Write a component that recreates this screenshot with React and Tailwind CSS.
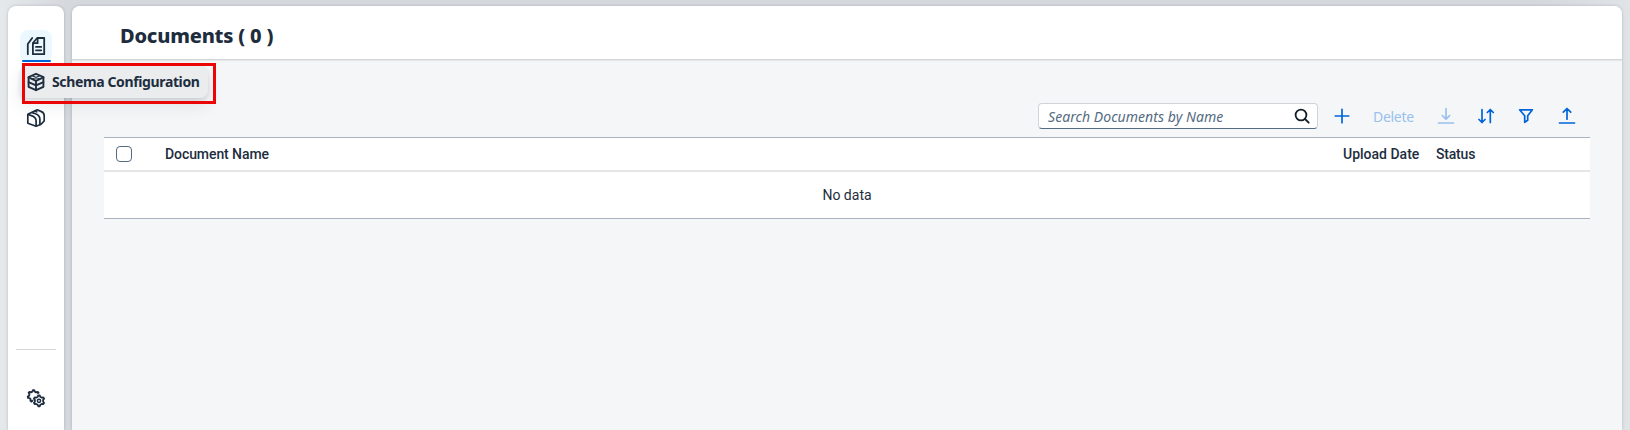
const stroke = {
  fill: "none",
  stroke: "currentColor",
  strokeLinecap: "round",
  strokeLinejoin: "round",
};

function DocumentsIcon() {
  return (
    <svg width="20" height="20" viewBox="0 0 20 20" {...stroke} strokeWidth="1.8">
      <path d="M1.8 18.2V8L6.2 2" />
      <path d="M6.9 18.2V7l4.300-5h7v16.200Z" />
      <path d="M11.6 2.4v4.800H7.400" />
      <path d="M10 10.900h5.200M10 14.300h5.200" />
    </svg>
  );
}

function SchemaIcon() {
  return (
    <svg width="20" height="20" viewBox="0 0 20 20" {...stroke} strokeWidth="1.9">
      <path d="M10 1.8 17.4 5v9.8L10 18.2l-7.4-3.4V5Z" />
      <path d="M2.6 5.4 10 8.8l7.4-3.4M10 8.8v9.2M2.6 10.2 10 13.4l7.4-3.2" />
      <path d="M6.2 3.8 13.6 7M13.8 3.8 6.4 7" strokeWidth="1.1" />
    </svg>
  );
}

function TemplatesIcon() {
  return (
    <svg width="20" height="20" viewBox="0 0 20 20" {...stroke} strokeWidth="1.7">
      <path d="M1.8 6.3v9l8.3 2.9 5-2 3.1-3.2V7.6c0-2.2-1-3.2-2.8-4L11.2 1.8 1.8 6.3l3.6 1.3c3 1 4.7 2.4 4.7 5.2v5.4" />
      <path d="m6.2 4.6 3.3 1.2c3 1.1 4.4 2.7 4.4 5.5v5.2" />
      <path d="m9.2 3.2 1.6.6" />
    </svg>
  );
}

function gearPath(cx, cy, outer, inner, teeth) {
  const points = [];
  for (let i = 0; i < teeth; i += 1) {
    const center = (i / teeth) * Math.PI * 2 - Math.PI / 2;
    const step = (Math.PI * 2) / teeth;
    [
      [-0.3, inner],
      [-0.13, outer],
      [0.13, outer],
      [0.3, inner],
    ].forEach(([offset, radius]) => {
      const angle = center + offset * step;
      points.push(`${(cx + radius * Math.cos(angle)).toFixed(2)} ${(cy + radius * Math.sin(angle)).toFixed(2)}`);
    });
  }
  return `M${points.join("L")}Z`;
}

function SettingsIcon() {
  const front = gearPath(13, 12.8, 5.5, 4.2, 6);
  return (
    <svg width="20" height="20" viewBox="0 0 20 20" {...stroke} strokeWidth="1.8">
      <path d={gearPath(7.6, 8, 5.9, 4.5, 7)} />
      <path d={front} stroke="white" strokeWidth="3" fill="white" />
      <path d={front} />
      <circle cx="13" cy="12.8" r="1.6" strokeWidth="1.5" />
    </svg>
  );
}

function ToolIcon({ d, className }) {
  return (
    <svg width="18" height="18" viewBox="0 0 18 18" {...stroke} strokeWidth="1.7" className={className}>
      <path d={d} />
    </svg>
  );
}

function Sidebar() {
  return (
    <aside className="relative flex h-[424px] w-14 shrink-0 flex-col items-center rounded-t-lg bg-white pt-6 shadow-[0_0_3px_rgba(34,53,72,0.25)]">
      <div className="flex h-8 w-8 shrink-0 flex-col items-center justify-between rounded-lg bg-[#ebf8ff]">
        <div className="pt-1.5"><DocumentsIcon /></div>
        <div className="h-0.5 w-[29px] shrink-0 rounded-xs bg-[#0064d9]" />
      </div>
      <div className="mt-1 h-8 w-8" />
      <div className="mt-1 flex h-8 w-8 items-center justify-center"><TemplatesIcon /></div>
      <div className="mt-[215px] h-px w-10 bg-[#d5d7d9]" />
      <div className="mt-8 flex h-8 w-8 items-center justify-center"><SettingsIcon /></div>

      <div className="absolute left-3 top-[60px] z-10 flex h-8 w-[188px] items-center gap-[6px] rounded-lg bg-[#eaecee] pl-[6px] shadow-[0_2px_4px_rgba(34,53,72,0.12),0_8px_16px_rgba(34,53,72,0.10)]">
        <SchemaIcon />
        <span className="whitespace-nowrap pb-px text-[14px] font-bold tracking-[-0.37px]">Schema Configuration</span>
      </div>
      <div className="absolute left-[14px] top-[57px] z-20 h-[41px] w-[194px] border-[3px] border-[#eb0505]" />
    </aside>
  );
}

function Toolbar() {
  return (
    <div className="flex h-8 items-center justify-end pr-3.5 text-[#0064d9]">
      <div className="mr-[15px] flex h-[26px] w-[280px] items-center justify-between rounded border border-[#d0d4d9] border-b-[#556b82] bg-white pl-[9px] pr-[7px]">
        <span className="whitespace-nowrap text-[14px] italic tracking-[0.06px] text-[#556b82]">Search Documents by Name</span>
        <svg width="16" height="16" viewBox="0 0 16 16" {...stroke} strokeWidth="1.8" className="text-[#131e29]">
          <circle cx="7" cy="7" r="5.4" />
          <path d="m11 11 3.7 3.7" />
        </svg>
      </div>
      <ToolIcon d="M9 2.3v13.4M2.3 9h13.4" />
      <span className="ml-[22px] w-[42px] text-[14px] tracking-[-0.3px] text-[#99c1f0]">Delete</span>
      <ToolIcon className="ml-[22px] text-[#99c1f0]" d="M9 1.5v10.7M5.3 8.5 9 12.2l3.7-3.7M1.5 16h15" />
      <ToolIcon className="ml-[22px]" d="M5 2.5v13M2 12.5l3 3 3-3M13.3 15.5v-13M10.3 5.5l3-3 3 3" />
      <ToolIcon className="ml-[22px]" d="M2.600 2.800h12.800l-4.700 6v4.500l-3 2V8.800Z" />
      <ToolIcon className="ml-[23px]" d="M9 12.2V1.5M5.3 5.2 9 1.5l3.7 3.7M1.5 16h15" />
    </div>
  );
}

function DocumentsTable() {
  return (
    <div className="mt-[5px] border-y border-[#a8b3bd] bg-white font-[Roboto,sans-serif] text-[14px]">
      <div className="flex h-[34px] items-center border-b-2 border-[#e5e5e5] font-medium">
        <span className="ml-3 h-4 w-4 rounded border border-[#556b82]" />
        <span className="ml-[33px] flex-1 tracking-[-0.08px]">Document Name</span>
        <span className="w-[93px]">Upload Date</span>
        <span className="w-[154px] tracking-[-0.2px]">Status</span>
      </div>
      <div className="flex h-[46px] items-center justify-center pt-px">No data</div>
    </div>
  );
}

export default function App() {
  return (
    <div className="flex h-[430px] w-[1630px] gap-2 overflow-hidden bg-[linear-gradient(90deg,#e6e9eb_0px,#d5d9de_64px,#d5d9de_1540px,#e0e4e7_1630px)] pl-2 pt-1.5 font-['Noto_Sans',sans-serif] text-[#1d2d3e]">
      <Sidebar />
      <main className="h-[424px] w-[1550px] rounded-t-lg bg-[#f5f6f7] shadow-[0_0_3px_rgba(34,53,72,0.25)]">
        <header className="flex h-[54px] items-center rounded-t-lg border-b border-[#d3d6d9] bg-white pl-12 pt-[6px] shadow-[0_1px_1px_rgba(34,53,72,0.08)]">
          <h1 className="whitespace-nowrap text-[20px] font-extrabold tracking-[-0.2px]">Documents ( 0 )</h1>
        </header>
        <section className="px-8 pt-10">
          <Toolbar />
          <DocumentsTable />
        </section>
      </main>
    </div>
  );
}
